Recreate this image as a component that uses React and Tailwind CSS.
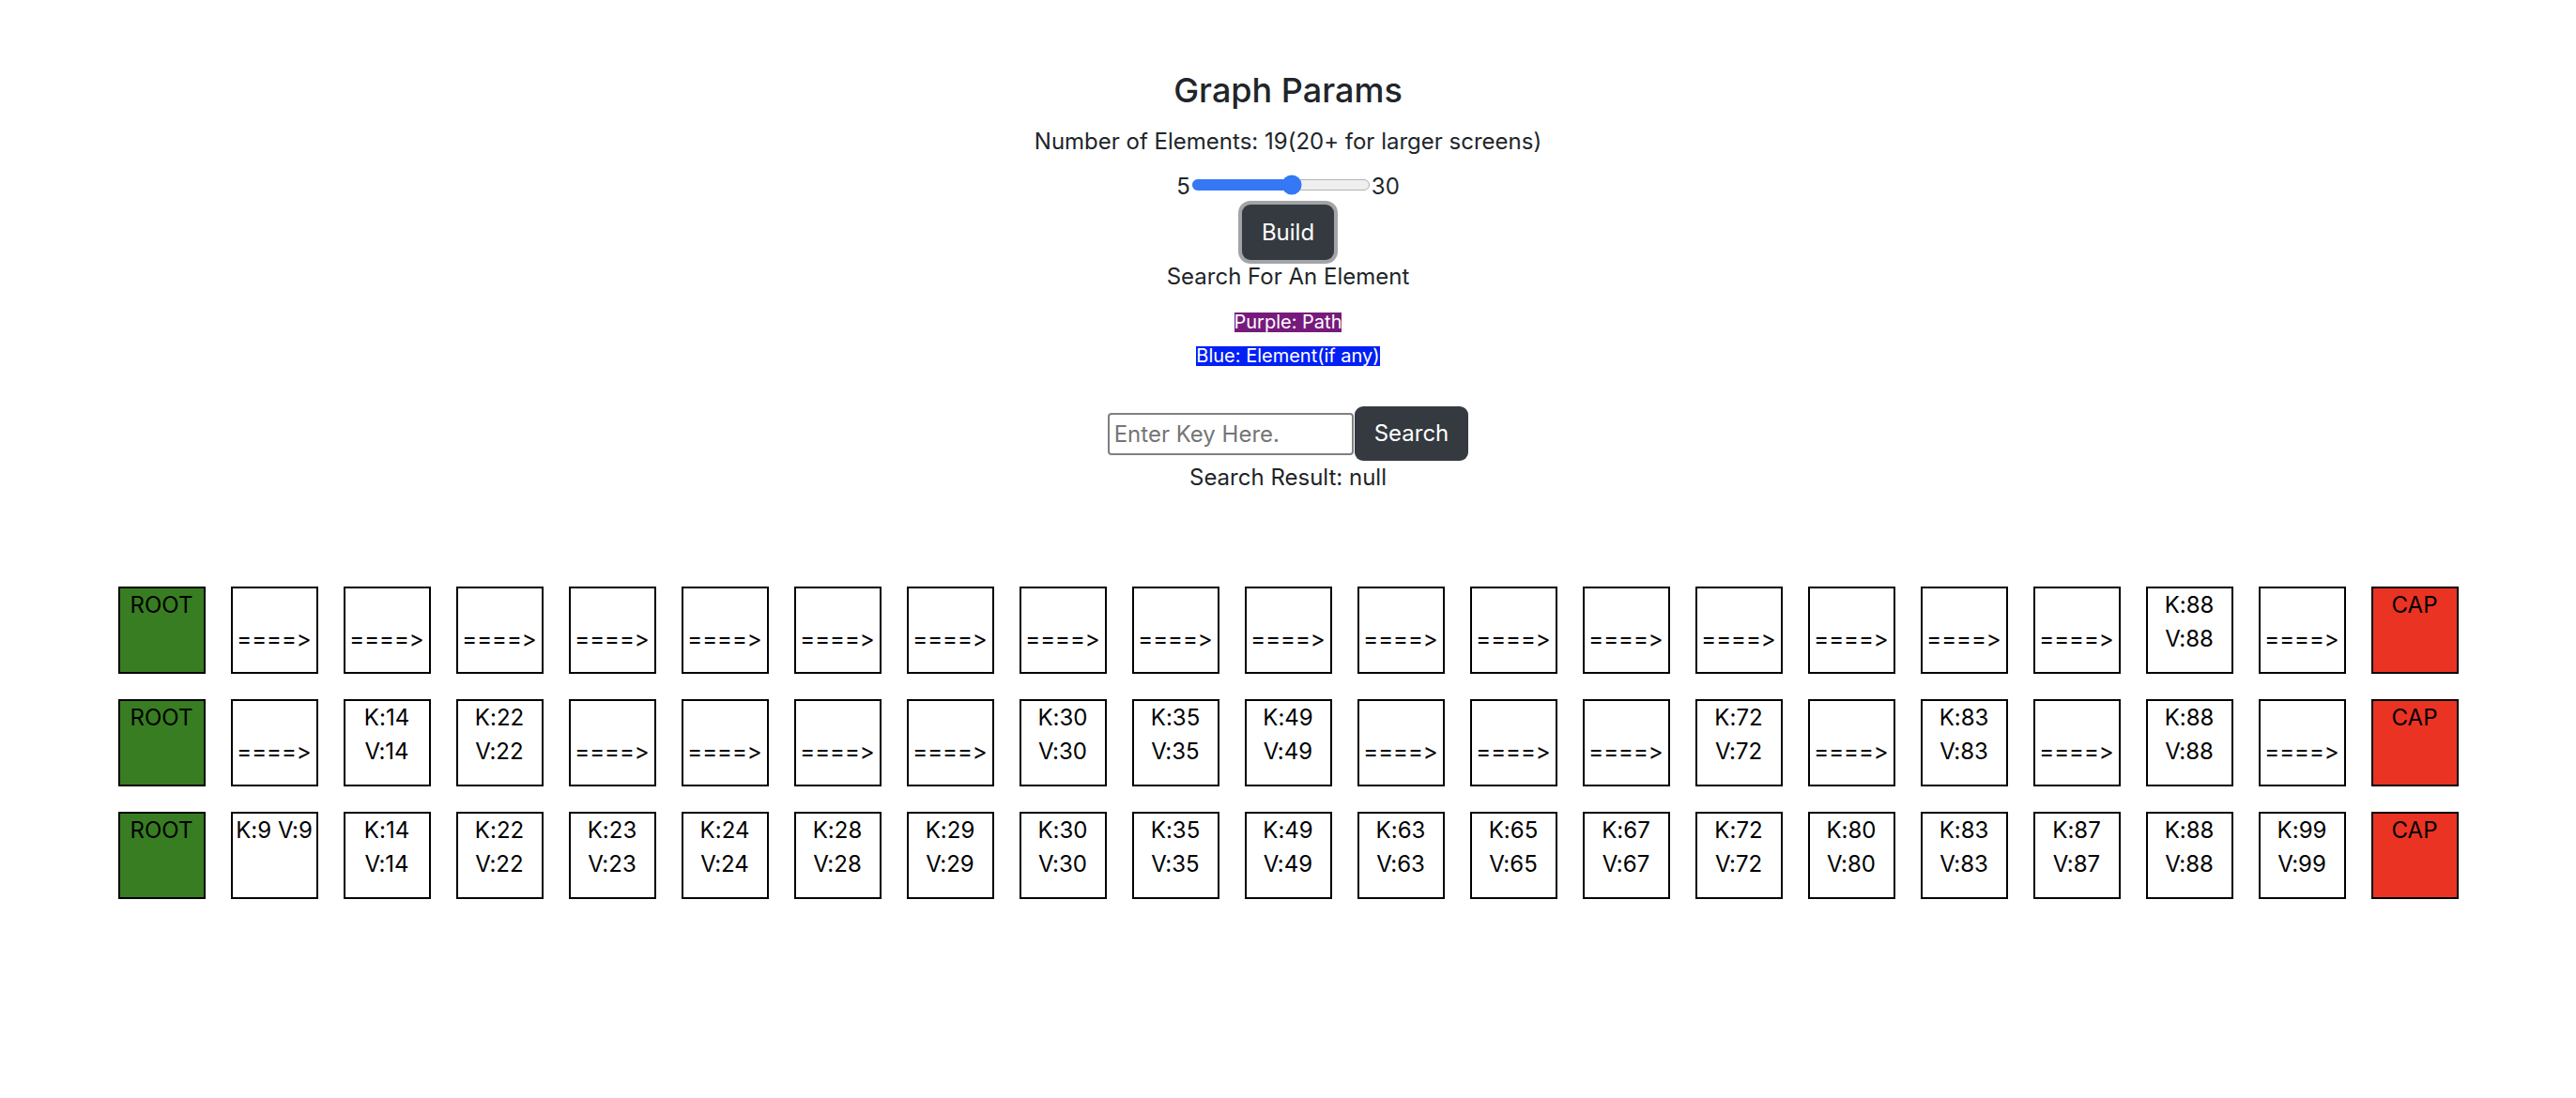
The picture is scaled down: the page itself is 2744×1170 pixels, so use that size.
import React, { useState } from "react";

const ALL_KEYS = [9, 14, 22, 23, 24, 28, 29, 30, 35, 49, 63, 65, 67, 72, 80, 83, 87, 88, 99];

// each level of the skip list, top to bottom
const LEVELS = [
  [88],
  [14, 22, 30, 35, 49, 72, 83, 88],
  ALL_KEYS,
];

function Node({ kind, k }) {
  const base =
    "w-[93px] h-[93px] shrink-0 border-2 border-black text-center text-[24px] leading-[36px] text-black";

  if (kind === "root") {
    return <div className={`${base} bg-[#387d22]`}>ROOT</div>;
  }
  if (kind === "cap") {
    return <div className={`${base} bg-[#ea3323]`}>CAP</div>;
  }
  if (kind === "arrow") {
    return (
      <div className={`${base} bg-white`}>
        <br />
        ====&gt;
      </div>
    );
  }
  return (
    <div className={`${base} bg-white`}>
      K:{k} V:{k}
    </div>
  );
}

function Slider({ min, max, value }) {
  const pct = ((value - min) / (max - min)) * 100;
  return (
    <div className="relative m-[2px] mb-[6px] w-[189px] h-[12px] rounded-full bg-[#efefef] border border-[#b3b3b3]">
      <div
        className="absolute -top-px -bottom-px -left-px rounded-full bg-[#3478f6]"
        style={{ width: `calc(${pct}% + 1px)` }}
      />
      <div
        className="absolute top-1/2 w-[21px] h-[21px] -translate-x-1/2 -translate-y-1/2 rounded-full bg-[#3478f6]"
        style={{ left: `${pct}%` }}
      />
    </div>
  );
}

export default function App() {
  const [count] = useState(19);
  const [searchKey, setSearchKey] = useState("");

  return (
    <div className="min-h-screen bg-white font-['Inter','Noto_Sans',sans-serif] [font-feature-settings:'calt'_0,'liga'_0] [font-variant-ligatures:none] text-[#212529] text-[24px] leading-[36px]">
      <div className="flex flex-col items-center pt-[75px]">
        <h4 className="text-[36px] leading-[43px] font-medium">Graph Params</h4>
        <p className="mt-[15px]">Number of Elements: {count}(20+ for larger screens)</p>

        <div className="mt-[12px] flex items-center h-[36px]">
          <span>5</span>
          <Slider min={5} max={30} value={count} />
          <span>30</span>
        </div>

        <button className="mt-[1px] h-[59px] px-[21px] rounded-[9px] bg-[#343a40] text-white ring-4 ring-[#a2a4a7]">
          Build
        </button>

        <p>Search For An Element</p>

        <span className="mt-[20px] inline-block bg-[#761b7c] text-white text-[20px] leading-[21px]">
          Purple: Path
        </span>
        <span className="mt-[15px] inline-block bg-[#0020f5] text-white text-[20px] leading-[21px]">
          Blue: Element(if any)
        </span>

        <div className="mt-[43px] flex items-center gap-[1px]">
          <input
            type="text"
            value={searchKey}
            onChange={(e) => setSearchKey(e.target.value)}
            placeholder="Enter Key Here."
            className="w-[262px] h-[45px] px-[5px] border-2 border-[#808080] rounded-[4px] text-[24px] text-black placeholder:text-[#757575] outline-none"
          />
          <button className="h-[58px] px-[21px] rounded-[9px] bg-[#343a40] text-white">
            Search
          </button>
        </div>

        <p>Search Result: null</p>
      </div>

      {/* skip list levels */}
      <div className="mt-[98px] flex flex-col gap-[27px]">
        {LEVELS.map((level, i) => (
          <div key={i} className="flex justify-center gap-[27px]">
            <Node kind="root" />
            {ALL_KEYS.map((k) =>
              level.includes(k) ? <Node key={k} k={k} /> : <Node key={k} kind="arrow" />
            )}
            <Node kind="cap" />
          </div>
        ))}
      </div>
    </div>
  );
}
